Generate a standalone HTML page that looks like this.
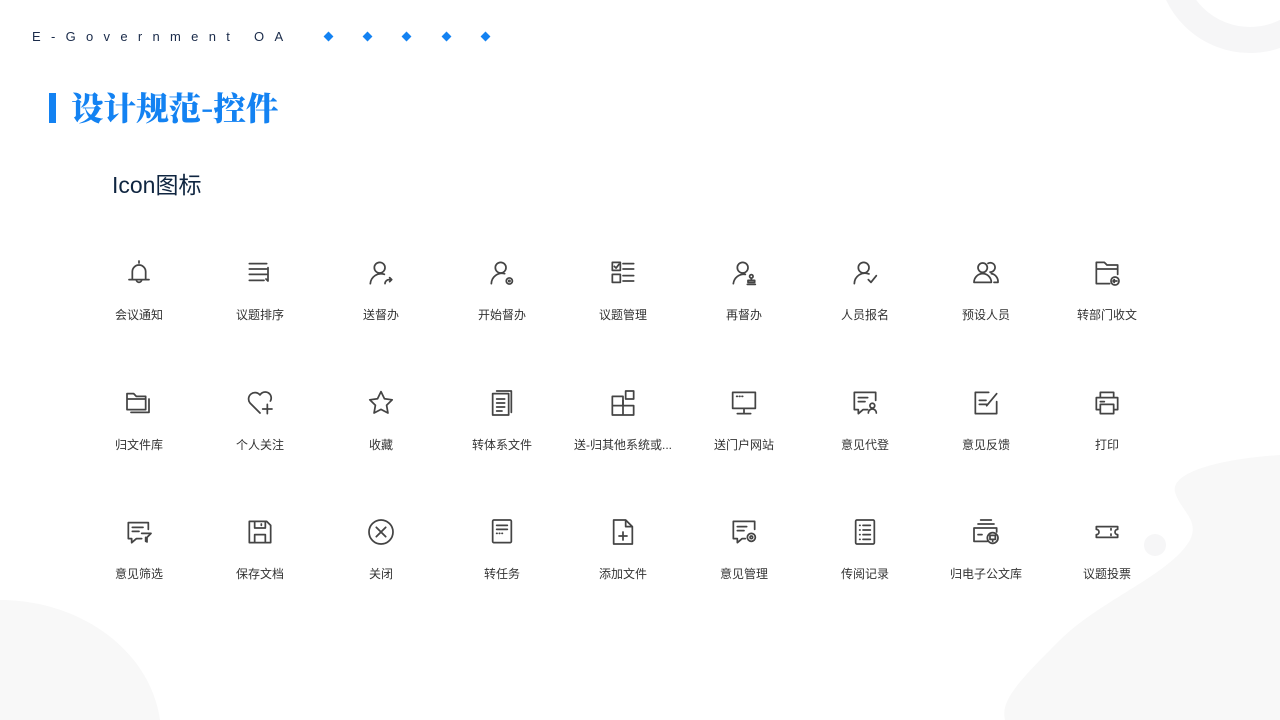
<!DOCTYPE html>
<html><head><meta charset="utf-8"><style>
html,body{margin:0;padding:0}
body{width:1280px;height:720px;position:relative;overflow:hidden;background:#fff;font-family:"Liberation Sans","Noto Sans CJK SC",sans-serif}
.hdr{position:absolute;left:32px;top:29px;font-size:13px;color:#1a2b4a;letter-spacing:10.3px;white-space:nowrap}
.dm{position:absolute;top:33px;width:7px;height:7px;background:#1382f2;transform:rotate(45deg)}
.bar{position:absolute;left:49px;top:93px;width:7px;height:30px;background:#1382f2}
.title{position:absolute;left:71px;top:84px;font-family:"Noto Serif CJK SC",serif;font-weight:900;font-size:32.5px;color:#1382f2;white-space:nowrap}
.sub{position:absolute;left:112px;top:166px;font-size:23px;color:#0f2540;white-space:nowrap}
.it{position:absolute;width:120px;text-align:center}
.it svg{display:block;margin:0 auto}
.it div{font-size:12px;color:#333;margin-top:17px;white-space:nowrap}
svg.i{fill:none;stroke:#444;stroke-width:1.3;stroke-linecap:round;stroke-linejoin:round}
</style></head><body>
<svg width="1280" height="720" style="position:absolute;left:0;top:0">
<circle cx="1250" cy="-40" r="80" fill="none" stroke="#f6f6f7" stroke-width="26"/>
<path d="M0 600 C80 600 150 650 160 720 L0 720Z" fill="#f8f8f8"/>
<path d="M1280 455 C1230 458 1170 470 1175 492 C1180 510 1200 520 1190 540 C1170 575 1100 600 1060 640 C1020 680 1000 700 1005 720 L1280 720Z" fill="#f8f8f8"/>
<circle cx="1155" cy="545" r="11" fill="#f6f6f7"/>
</svg>
<div class="hdr">E-Government OA</div>
<div class="dm" style="left:325px"></div><div class="dm" style="left:364px"></div><div class="dm" style="left:403px"></div><div class="dm" style="left:443px"></div><div class="dm" style="left:482px"></div>
<div class="bar"></div>
<div class="title">设计规范-控件</div>
<div class="sub">Icon图标</div>

<!-- Row 1 -->
<div class="it" style="left:79px;top:257px"><svg class="i" width="32" height="32" viewBox="0 0 24 24"><path d="M12 3v1.5M7 17v-6a5 5 0 0 1 10 0v6M4.5 17h15M10 17a2 2 0 0 0 4 0"/></svg><div>会议通知</div></div>
<div class="it" style="left:200px;top:257px"><svg class="i" width="32" height="32" viewBox="0 0 24 24"><path d="M4 5h13M4 9h13M4 13h13M4 17.5h11M18 8v10l-1.5-1.5"/></svg><div>议题排序</div></div>
<div class="it" style="left:321px;top:257px"><svg class="i" width="32" height="32" viewBox="0 0 24 24"><circle cx="11" cy="8" r="4"/><path d="M4 20a8 8 0 0 1 10.5-7M15 20a3 3 0 0 1 3-3h2M18.5 15.5l1.5 1.5-1.5 1.5"/></svg><div>送督办</div></div>
<div class="it" style="left:442px;top:257px"><svg class="i" width="32" height="32" viewBox="0 0 24 24"><circle cx="11" cy="8" r="4"/><path d="M4 20a8 8 0 0 1 10-7.5"/><circle cx="17.5" cy="18" r="2.3"/><circle cx="17.5" cy="18" r=".5"/></svg><div>开始督办</div></div>
<div class="it" style="left:563px;top:257px"><svg class="i" width="32" height="32" viewBox="0 0 24 24"><rect x="4" y="4" width="6" height="6"/><path d="M5.5 7l1.3 1.3L9 5.5M12 5h8M12 9h8M12 14h8M12 18h8"/><rect x="4" y="13" width="6" height="6"/></svg><div>议题管理</div></div>
<div class="it" style="left:684px;top:257px"><svg class="i" width="32" height="32" viewBox="0 0 24 24"><circle cx="11" cy="8" r="4"/><path d="M4 20a8 8 0 0 1 9-7"/><circle cx="17.5" cy="14.5" r="1.3"/><path d="M17.5 16v1.5M15 17.5h5v1.5h-5zM14.5 20.5h6"/></svg><div>再督办</div></div>
<div class="it" style="left:805px;top:257px"><svg class="i" width="32" height="32" viewBox="0 0 24 24"><circle cx="11" cy="8" r="4"/><path d="M4 20a8 8 0 0 1 11-7.3M14.5 17l2 2 4-5"/></svg><div>人员报名</div></div>
<div class="it" style="left:926px;top:257px"><svg class="i" width="32" height="32" viewBox="0 0 24 24"><circle cx="9.5" cy="8" r="3.5"/><path d="M3 19a6.5 6.5 0 0 1 13 0zM13.5 4.8a3.5 3.5 0 1 1 1.5 6.5M16 12.5a6 6 0 0 1 5 6.5h-3"/></svg><div>预设人员</div></div>
<div class="it" style="left:1047px;top:257px"><svg class="i" width="32" height="32" viewBox="0 0 24 24"><path d="M14 20H4V4h6l2 2h8v7M4 9h16"/><circle cx="18" cy="18" r="3"/><path d="M19.5 18h-3M17.5 17l-1 1 1 1"/></svg><div>转部门收文</div></div>

<!-- Row 2 -->
<div class="it" style="left:79px;top:387px"><svg class="i" width="32" height="32" viewBox="0 0 24 24"><path d="M3 17V5h5l2 2h7v10zM3 9h14M19.5 9v10H6"/></svg><div>归文件库</div></div>
<div class="it" style="left:200px;top:387px"><svg class="i" width="32" height="32" viewBox="0 0 24 24"><path d="M12 19.5L4.5 12A4.5 4.5 0 0 1 12 6a4.5 4.5 0 0 1 7.8 4.5M17.5 13v7M14 16.5h7"/></svg><div>个人关注</div></div>
<div class="it" style="left:321px;top:387px"><svg class="i" width="32" height="32" viewBox="0 0 24 24"><path d="M12 3.5l2.6 5.3 5.8.8-4.2 4.1 1 5.8L12 16.8l-5.2 2.7 1-5.8-4.2-4.1 5.8-.8z"/></svg><div>收藏</div></div>
<div class="it" style="left:442px;top:387px"><svg class="i" width="32" height="32" viewBox="0 0 24 24"><rect x="5" y="5" width="12" height="16"/><path d="M8 3h11v16M8 9h6M8 12h6M8 15h6M8 18h4"/></svg><div>转体系文件</div></div>
<div class="it" style="left:563px;top:387px"><svg class="i" width="32" height="32" viewBox="0 0 24 24"><path d="M4 7h8v14H4zM4 14h16v7h-8"/><rect x="14" y="3" width="6" height="6"/><path d="M12 10v4"/></svg><div>送-归其他系统或...</div></div>
<div class="it" style="left:684px;top:387px"><svg class="i" width="32" height="32" viewBox="0 0 24 24"><rect x="3.5" y="4" width="17" height="12"/><path d="M12 16v4M7 20h10M6.5 7h.5M8.5 7h.5M10.5 7h.5"/></svg><div>送门户网站</div></div>
<div class="it" style="left:805px;top:387px"><svg class="i" width="32" height="32" viewBox="0 0 24 24"><path d="M20 10V4H4v13h3v3l3.5-3H14M7 8h7M7 11h5"/><circle cx="17.5" cy="14" r="1.8"/><path d="M14.5 19.5a3 3 0 0 1 6 0"/></svg><div>意见代登</div></div>
<div class="it" style="left:926px;top:387px"><svg class="i" width="32" height="32" viewBox="0 0 24 24"><path d="M14 4H4v16h16v-9M7 10h5M7 13h6M12.5 14L20 5"/></svg><div>意见反馈</div></div>
<div class="it" style="left:1047px;top:387px"><svg class="i" width="32" height="32" viewBox="0 0 24 24"><path d="M7 8V4h10v4M7 17H4V8h16v9h-3M7 13h10v7H7zM7 11h3"/></svg><div>打印</div></div>

<!-- Row 3 -->
<div class="it" style="left:79px;top:516px"><svg class="i" width="32" height="32" viewBox="0 0 24 24"><path d="M14 17h-4l-3.5 3v-3H4V5h15v5M7 8.5h8M7 11.5h5M14 13h7l-3 3v3.5M17 16v3"/></svg><div>意见筛选</div></div>
<div class="it" style="left:200px;top:516px"><svg class="i" width="32" height="32" viewBox="0 0 24 24"><path d="M4 4h13l3 3v13H4zM8 4v5h8V4M8 20v-6h8v6M13 6v1"/></svg><div>保存文档</div></div>
<div class="it" style="left:321px;top:516px"><svg class="i" width="32" height="32" viewBox="0 0 24 24"><circle cx="12" cy="12" r="9"/><path d="M8.5 8.5l7 7M15.5 8.5l-7 7"/></svg><div>关闭</div></div>
<div class="it" style="left:442px;top:516px"><svg class="i" width="32" height="32" viewBox="0 0 24 24"><rect x="5" y="3" width="14" height="17" rx="1"/><path d="M8 7h8M8 10h8M8 13h.3M10 13h.3M12 13h.3"/></svg><div>转任务</div></div>
<div class="it" style="left:563px;top:516px"><svg class="i" width="32" height="32" viewBox="0 0 24 24"><path d="M5 3h9l5 5v13H5zM14 3v5h5M12 12v6M9 15h6"/></svg><div>添加文件</div></div>
<div class="it" style="left:684px;top:516px"><svg class="i" width="32" height="32" viewBox="0 0 24 24"><path d="M20 10V4H4v13h3v3l3.5-3H13M7 8h7M7 11h5"/><circle cx="17.5" cy="16" r="3"/><circle cx="17.5" cy="16" r="1"/></svg><div>意见管理</div></div>
<div class="it" style="left:805px;top:516px"><svg class="i" width="32" height="32" viewBox="0 0 24 24"><rect x="5" y="3" width="14" height="18" rx="1"/><path d="M8 7h.3M8 10.5h.3M8 14h.3M8 17.5h.3M10.5 7h5.5M10.5 10.5h5.5M10.5 14h5.5M10.5 17.5h5.5"/></svg><div>传阅记录</div></div>
<div class="it" style="left:926px;top:516px"><svg class="i" width="32" height="32" viewBox="0 0 24 24"><path d="M8 3h8M6 6h12M13 19H3V9h17v3M6 14h3"/><circle cx="17" cy="16.5" r="4"/><rect x="15" y="14.5" width="4" height="3"/><path d="M17 17.5v1.5"/></svg><div>归电子公文库</div></div>
<div class="it" style="left:1047px;top:516px"><svg class="i" width="32" height="32" viewBox="0 0 24 24"><path d="M4 8h16v2a2 2 0 0 0 0 4v2H4v-2a2 2 0 0 0 0-4zM15 9.5v1M15 13.5v1"/></svg><div>议题投票</div></div>
</body></html>
